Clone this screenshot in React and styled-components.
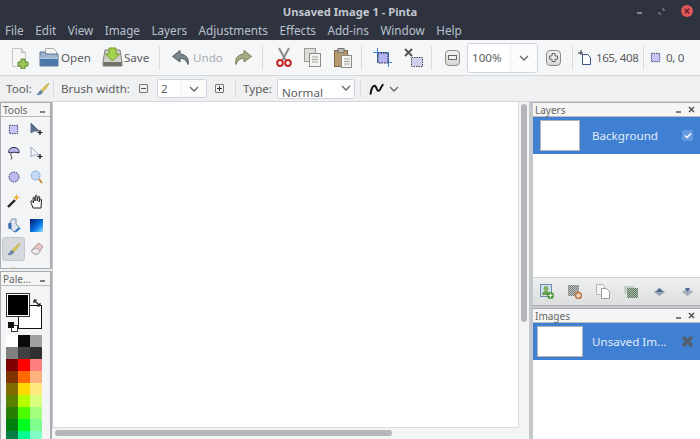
import React from "react";
import styled, { createGlobalStyle } from "styled-components";

const Global = createGlobalStyle`
  html, body { margin: 0; padding: 0; background: #eceded; }
  body { font-family: "Noto Sans", "Open Sans", sans-serif; font-size: 11.6px; overflow: hidden; }
`;

const Window = styled.div`
  width: 700px;
  height: 439px;
  display: flex;
  flex-direction: column;
  overflow: hidden;
  background: #e9eaeb;
  color: #4c4c4c;
`;

const TitleBar = styled.div`
  height: 22px;
  flex: none;
  background: #2f333f;
  display: grid;
  grid-template-columns: 1fr auto 1fr;
  align-items: center;
`;

const Title = styled.div`
  grid-column: 2;
  color: #c3c7cf;
  font-size: 11.2px;
  font-weight: 700;
`;

const WindowButtons = styled.div`
  justify-self: end;
  display: flex;
  align-items: center;
  gap: 16px;
  padding-right: 7px;
`;

const CloseDot = styled.div`
  width: 12px;
  height: 12px;
  border-radius: 50%;
  background: #e0565b;
  display: flex;
  align-items: center;
  justify-content: center;
`;

const MenuBar = styled.div`
  height: 18px;
  flex: none;
  background: #2f333f;
  display: flex;
  align-items: flex-start;
  padding: 1px 0 0 5px;
  box-sizing: border-box;
  gap: 11.5px;
  color: #b9c1cf;
  font-size: 11.7px;
  line-height: 15px;
`;

const ToolRow = styled.div`
  flex: none;
  height: ${(p) => p.$h}px;
  display: flex;
  align-items: center;
  background: ${(p) => p.$bg};
  border-bottom: 1px solid #d5d7d9;
  box-sizing: border-box;
`;

const Item = styled.div`
  flex: none;
  display: flex;
  align-items: center;
  justify-content: center;
  margin-left: ${(p) => p.$ml || 0}px;
`;

const Text = styled.span`
  flex: none;
  width: ${(p) => p.$w}px;
  margin-left: ${(p) => p.$ml || 0}px;
  color: ${(p) => p.$c || "#5c5c5c"};
  font-size: 11.6px;
  letter-spacing: ${(p) => p.$ls || 0}px;
  white-space: nowrap;
`;

const Sep = styled.div`
  flex: none;
  width: 1px;
  height: ${(p) => p.$h || 24}px;
  background: #d9dbdd;
  margin-left: ${(p) => p.$ml || 0}px;
`;

const Combo = styled.div`
  flex: none;
  box-sizing: border-box;
  height: ${(p) => p.$h}px;
  width: ${(p) => p.$w}px;
  margin-left: ${(p) => p.$ml || 0}px;
  display: flex;
  align-items: ${(p) => (p.$clip ? "flex-start" : "center")};
  background: #fff;
  border: 1px solid #cdd3e0;
  border-radius: 3px;
  overflow: hidden;
  color: #5c5c5c;
  font-size: 11.6px;
`;

const ComboText = styled.div`
  flex: 1;
  padding-left: ${(p) => p.$pl || 4}px;
  padding-top: ${(p) => p.$pt || 0}px;
  line-height: 16px;
`;

const ComboArrow = styled.div`
  flex: none;
  width: ${(p) => p.$w}px;
  height: 100%;
  display: flex;
  align-items: ${(p) => (p.$top ? "flex-start" : "center")};
  padding-top: ${(p) => (p.$top ? 3 : 0)}px;
  justify-content: center;
  background: #fbfbfb;
  border-left: ${(p) => (p.$line ? "1px solid #f0f0f0" : "none")};
  box-sizing: border-box;
`;

const ZoomButton = styled.div`
  flex: none;
  width: 15px;
  height: 16px;
  margin-left: ${(p) => p.$ml}px;
  border: 1px solid #8d8d88;
  border-radius: 4px;
  background: linear-gradient(#f2f2f0, #d6d6d2);
  box-sizing: border-box;
  display: flex;
  align-items: center;
  justify-content: center;
`;

const SmallSquare = styled.div`
  flex: none;
  width: 9px;
  height: 9px;
  margin-left: ${(p) => p.$ml}px;
  border: 1px solid #777;
  border-radius: 1px;
  background: #efefef;
  box-sizing: border-box;
  display: flex;
  align-items: center;
  justify-content: center;
`;

const Main = styled.div`
  flex: 1;
  min-height: 0;
  display: flex;
  background: #c9cccf;
`;

const LeftColumn = styled.div`
  flex: none;
  width: 52px;
  display: flex;
  flex-direction: column;
  gap: 2px;
  background: #eceded;
  box-sizing: border-box;
`;

const Dock = styled.div`
  flex: ${(p) => (p.$h ? "none" : 1)};
  height: ${(p) => (p.$h ? p.$h + "px" : "auto")};
  min-height: 0;
  display: flex;
  flex-direction: column;
  overflow: hidden;
  box-sizing: border-box;
  background: ${(p) => p.$bg || "#f3f4f5"};
  border: 1px solid #a9adb1;
  border-left-width: ${(p) => (p.$side ? 4 : 1)}px;
  border-left-color: ${(p) => (p.$side ? "#c5c8cb" : "#a9adb1")};
  border-right-width: ${(p) => (p.$side ? 0 : 2)}px;
  border-bottom-width: ${(p) => (p.$open ? 0 : 1)}px;
`;

const DockHead = styled.div`
  flex: none;
  height: 14px;
  display: flex;
  align-items: center;
  padding: 0 3px 0 2px;
  box-sizing: border-box;
  background: #f4f5f4;
  border-bottom: 1px solid #b9bcbf;
  font-size: 10px;
  color: #666;
`;

const DockTitle = styled.span`
  flex: 1;
`;

const DockControls = styled.div`
  display: flex;
  align-items: center;
  gap: 7px;
  padding-right: 2px;
`;

const ToolGrid = styled.div`
  display: grid;
  grid-template-columns: 23px 23px;
  grid-auto-rows: 24px;
  padding-left: 1px;
`;

const ToolCell = styled.div`
  display: flex;
  align-items: center;
  justify-content: center;
  border-radius: 3px;
  background: ${(p) => (p.$active ? "#d5d8dc" : "transparent")};
  border: 1px solid ${(p) => (p.$active ? "#c3c7cc" : "transparent")};
  box-sizing: border-box;
`;

const ColorStage = styled.div`
  position: relative;
  height: 49px;
  flex: none;
`;

const SwatchPrimary = styled.div`
  position: absolute;
  left: 5px;
  top: 7px;
  width: 24px;
  height: 24px;
  box-sizing: border-box;
  background: #000;
  border: 1px solid #333;
  outline: 1px solid #fff;
  outline-offset: -2px;
  z-index: 1;
`;

const SwatchSecondary = styled.div`
  position: absolute;
  left: 17px;
  top: 19px;
  width: 24px;
  height: 24px;
  box-sizing: border-box;
  background: #fff;
  border: 1px solid #111;
`;

const SwapIcon = styled.div`
  position: absolute;
  left: 32px;
  top: 9px;
`;

const ResetIcon = styled.div`
  position: absolute;
  left: 7px;
  top: 34px;
`;

const PaletteGrid = styled.div`
  display: grid;
  grid-template-columns: repeat(3, 12px);
  grid-auto-rows: 12px;
  padding-left: 5px;
`;

const Chip = styled.div`
  background: ${(p) => p.$c};
`;

const CanvasColumn = styled.div`
  flex: 1;
  min-width: 0;
  display: flex;
  flex-direction: column;
  background: #f3f4f5;
`;

const CanvasRow = styled.div`
  flex: 1;
  min-height: 0;
  display: flex;
`;

const Canvas = styled.div`
  flex: 1;
  background: #fff;
  border-left: 1px solid #c9cccf;
  border-right: 1px solid #d8dadc;
  border-bottom: 1px solid #d8dadc;
`;

const VTrack = styled.div`
  flex: none;
  width: 10px;
  padding: 2px 2px 0 2px;
  box-sizing: border-box;
`;

const VThumb = styled.div`
  width: 6px;
  height: 218px;
  border-radius: 3px;
  background: #b4b6b9;
`;

const HTrack = styled.div`
  flex: none;
  height: 11px;
  padding: 2px 0 0 3px;
  box-sizing: border-box;
`;

const HThumb = styled.div`
  width: 337px;
  height: 6px;
  border-radius: 3px;
  background: #b4b6b9;
`;

const RightColumn = styled.div`
  flex: none;
  width: 171px;
  display: flex;
  flex-direction: column;
  gap: 2px;
  background: #c9cccf;
  box-sizing: border-box;
`;

const RowList = styled.div`
  flex: 1;
  background: #fff;
`;

const SelectedRow = styled.div`
  height: ${(p) => p.$h}px;
  display: flex;
  align-items: center;
  background: #3f80d3;
  color: #e2ecf8;
  font-size: 11.6px;
`;

const Thumb = styled.div`
  flex: none;
  height: ${(p) => p.$h}px;
  width: ${(p) => p.$w}px;
  margin-left: ${(p) => p.$ml}px;
  background: #fff;
  border: 1px solid #b3b3b3;
  box-sizing: border-box;
`;

const RowName = styled.div`
  flex: 1;
  margin-left: ${(p) => p.$ml}px;
  white-space: nowrap;
`;

const CheckBox = styled.div`
  flex: none;
  width: 11px;
  height: 11px;
  margin-right: 7px;
  border-radius: 2px;
  background: #6399de;
  display: flex;
  align-items: center;
  justify-content: center;
`;

const CloseImage = styled.div`
  flex: none;
  display: flex;
  margin-right: 6px;
`;

const LayerToolbar = styled.div`
  flex: none;
  height: 28px;
  display: grid;
  grid-template-columns: repeat(6, 28px);
  align-items: center;
  justify-items: center;
  background: linear-gradient(#eff0f0, #dcdedf);
  border-top: 1px solid #ccced0;
  box-sizing: border-box;
`;

const Selection = ({ size = 12, round }) => (
  <svg width={size} height={size} viewBox="0 0 12 12">
    {round ? (
      <circle cx="6" cy="6" r="5" fill="#bcbcf2" stroke="#33335c" strokeDasharray="1.5 1" />
    ) : (
      <rect x="1.5" y="1.5" width="9" height="9" fill="#c4c4f6" stroke="#33335c" strokeDasharray="1.5 1" />
    )}
  </svg>
);

const NewIcon = () => (
  <svg width="18" height="22" viewBox="0 0 18 22">
    <path d="M1.5 1.5h9l4 4v14h-13z" fill="#f6f6f4" stroke="#c4c4c0" />
    <path d="M10.5 1.5v4h4" fill="#e4e4e0" stroke="#bbb" />
    <path d="M10 12h4v3h3v4h-3v3h-4v-3H7v-4h3z" fill="#9cc45c" stroke="#5d8a2e" />
  </svg>
);

const OpenIcon = () => (
  <svg width="21" height="21" viewBox="0 0 21 21">
    <path d="M6.5 1.5h8l3 3v6h-11z" fill="#f4f4f2" stroke="#aaa" />
    <path d="M1 5h5l1 2h12v12H1z" fill="#9db3cb" stroke="#5a7696" />
    <path d="M1 11h18v8H1z" fill="#4d78a8" />
    <path d="M1 10h18v2H1z" fill="#a9c0d8" />
  </svg>
);

const SaveIcon = () => (
  <svg width="21" height="21" viewBox="0 0 21 21">
    <path d="M3 3h15l2 12v4H1v-4z" fill="#cfd0c9" stroke="#7c7d76" />
    <path d="M1.5 15h18v4h-18z" fill="#70716b" />
    <path d="M7 1h7v6h3.500l-7 7-7-7H7z" fill="#a6d34f" stroke="#6f9a28" />
  </svg>
);

const UndoIcon = ({ flip, fill = "#77848c", stroke = "#4f5a60" }) => (
  <svg width="20" height="17" viewBox="0 0 20 17" style={{ transform: flip ? "scaleX(-1)" : "none" }}>
    <path d="M9 1.500L1.500 7.500 9 13V9.500c3.500 0 6 1 8 6 1.500-6-2-10-8-10.500z" fill={fill} stroke={stroke} />
  </svg>
);

const CutIcon = () => (
  <svg width="16" height="21" viewBox="0 0 16 21">
    <path d="M3 1l6.500 12M13 1L6.500 13" stroke="#8a8a8a" strokeWidth="2" fill="none" />
    <ellipse cx="4" cy="16" rx="2.800" ry="3" fill="none" stroke="#c92626" strokeWidth="2" />
    <ellipse cx="12" cy="16" rx="2.800" ry="3" fill="none" stroke="#c92626" strokeWidth="2" />
  </svg>
);

const CopyIcon = ({ w = 17, h = 19 }) => (
  <svg width={w} height={h} viewBox="0 0 17 19">
    <rect x="0.500" y="0.500" width="11" height="13" fill="#dcdcd8" stroke="#9a9a96" />
    <rect x="5.500" y="5.500" width="11" height="13" fill="#f5f5f3" stroke="#8c8c88" />
    <path d="M8 9h6M8 11.500h6M8 14h6" stroke="#a0a09c" />
  </svg>
);

const PasteIcon = () => (
  <svg width="18" height="20" viewBox="0 0 18 20">
    <rect x="0.500" y="2.500" width="13" height="16" fill="#b69a6e" stroke="#7f6a48" />
    <rect x="4" y="0.500" width="6" height="4" fill="#b9b9b5" stroke="#777" />
    <rect x="7.500" y="7.500" width="10" height="12" fill="#f5f5f3" stroke="#8c8c88" />
    <path d="M10 11h6M10 13.500h6M10 16h6" stroke="#a0a09c" />
  </svg>
);

const CropIcon = () => (
  <svg width="19" height="19" viewBox="0 0 19 19">
    <path d="M0 4.500h15.500V19M4.500 0v14.500H19" stroke="#3f7fd6" fill="none" />
    <rect x="5" y="5" width="10" height="10" fill="#b4b4f4" stroke="#222" strokeDasharray="1.500 1" />
  </svg>
);

const DeselectIcon = () => (
  <svg width="20" height="20" viewBox="0 0 20 20">
    <rect x="7.500" y="9.500" width="11" height="9" fill="#d0d0ee" stroke="#444" strokeDasharray="1.500 1" />
    <path d="M1 1l7 7M8 1L1 8" stroke="#555" strokeWidth="2" />
  </svg>
);

const Chevron = ({ size = 9, color = "#666" }) => (
  <svg width={size} height={size} viewBox="0 0 10 10">
    <path d="M1 3l4 4 4-4" fill="none" stroke={color} strokeWidth="1.300" />
  </svg>
);

const CursorIcon = () => (
  <svg width="13" height="15" viewBox="0 0 13 15">
    <path d="M3 0v5M0 3h5" stroke="#333" />
    <path d="M4.500 4.500h5l3 3v7h-8z" fill="#fff" stroke="#335a87" />
  </svg>
);

const BrushIcon = () => (
  <svg width="14" height="14" viewBox="0 0 14 14">
    <path d="M13 1C10 3 7 6 5 8.500l1.500 1.500C9 8 12 4 13 1z" fill="#e2c55a" stroke="#b39a36" strokeWidth="0.600" />
    <path d="M5 8.500C3 9 3 11 1 12.500c2.500.5 5-.3 5.500-2.500z" fill="#6d8fb5" stroke="#44648a" strokeWidth="0.600" />
  </svg>
);

const CurveIcon = () => (
  <svg width="16" height="14" viewBox="0 0 16 14">
    <path d="M1.500 12.500C2 7 4 3 6 4s1.500 5 3.500 5S12 3 14.500 2.500" fill="none" stroke="#111" strokeWidth="2" />
  </svg>
);

const ArrowSelect = ({ outline }) => (
  <svg width="13" height="14" viewBox="0 0 13 14">
    <path d="M1 1v10l3-2h5z" fill={outline ? "#f4f6fb" : "#5c6f8f"} stroke={outline ? "#9aa8c8" : "#5c6f8f"} />
    <path d="M10 8v5M7.500 10.500h5" stroke="#111" strokeWidth="1.200" />
  </svg>
);

const LassoIcon = () => (
  <svg width="12" height="13" viewBox="0 0 12 13">
    <path d="M1 6C0 2 3 .5 6 .5s5.500 1.500 5 5.500C9 5 3 5 1 6z" fill="#b8b8ee" stroke="#27274a" />
    <path d="M3.500 6.500C2 8 3 9 3.500 9.500S4 12 3 12.500" fill="none" stroke="#333" />
  </svg>
);

const MagnifierIcon = () => (
  <svg width="13" height="14" viewBox="0 0 13 14">
    <circle cx="5.500" cy="5.500" r="4.500" fill="#c3dcf4" stroke="#8fb3d6" />
    <path d="M9 9l3 4" stroke="#c48a3a" strokeWidth="2" />
  </svg>
);

const WandIcon = () => (
  <svg width="13" height="14" viewBox="0 0 13 14">
    <path d="M1 13l7-7" stroke="#222" strokeWidth="2.400" />
    <path d="M9.500 0l1 2.500 2.500 1-2.500 1-1 2.500-1-2.500-2.500-1 2.500-1z" fill="#f0b030" />
  </svg>
);

const HandIcon = () => (
  <svg width="14" height="15" viewBox="0 0 14 15">
    <path d="M3 14C2 11 .5 8 1 7s2 .5 2.500 2L3 4c0-1 1.500-1 1.500 0l.5 3 .5-5c0-1 1.500-1 1.500 0l.2 5 1-4c.3-1 1.600-.7 1.500.3l-.7 4.700 1.200-2.500c.5-.8 1.600-.3 1.300.5L11 14z" fill="#fff" stroke="#222" />
  </svg>
);

const BucketIcon = () => (
  <svg width="15" height="15" viewBox="0 0 15 15">
    <path d="M6 1h4v5l3 3-5 5-6-6z" fill="#dfe6ee" stroke="#7d8fa5" />
    <path d="M4 5v6" stroke="#3a6fb5" strokeWidth="3" />
    <path d="M9 14l5-4" stroke="#3a7fd0" strokeWidth="2" />
  </svg>
);

const EraserIcon = () => (
  <svg width="14" height="14" viewBox="0 0 14 14">
    <path d="M8.500 1L13 4.500 8 12H4L1 9z" fill="#ecc3c3" stroke="#a99" />
    <path d="M1 9l3.500 3H8l2-3-4-3z" fill="#eee" stroke="#aaa" />
  </svg>
);

const PencilTip = () => (
  <svg width="10" height="14" viewBox="0 0 10 14">
    <path d="M1 3c1-2 6-2 7 0v11H1z" fill="#e3a445" />
  </svg>
);

const GradientIcon = () => (
  <svg width="13" height="13" viewBox="0 0 13 13">
    <defs>
      <linearGradient id="grad" x1="0" y1="0" x2="1" y2="1">
        <stop offset="0" stopColor="#001a6e" />
        <stop offset="0.600" stopColor="#0a78e8" />
        <stop offset="1" stopColor="#8fe4ff" />
      </linearGradient>
    </defs>
    <rect width="13" height="13" fill="url(#grad)" />
  </svg>
);

const Checker = ({ id, c1, c2 }) => (
  <pattern id={id} width="2" height="2" patternUnits="userSpaceOnUse">
    <rect width="2" height="2" fill={c1} />
    <rect width="1" height="1" fill={c2} />
    <rect x="1" y="1" width="1" height="1" fill={c2} />
  </pattern>
);

const AddLayerIcon = () => (
  <svg width="14" height="15" viewBox="0 0 14 15">
    <rect x="0.500" y="0.500" width="11" height="12" fill="#cfe0ef" stroke="#6c8db0" />
    <path d="M2 11c0-3 2-4 4-4s4 1 4 4z" fill="#6da04c" />
    <circle cx="6" cy="4.500" r="2.500" fill="#7fb05a" />
    <circle cx="10.500" cy="11.500" r="3.500" fill="#4f9a3a" />
    <path d="M8.500 11.500h4M10.500 9.500v4" stroke="#fff" />
  </svg>
);

const DeleteLayerIcon = () => (
  <svg width="14" height="14" viewBox="0 0 14 14">
    <defs><Checker id="grayCheck" c1="#7a807a" c2="#bcc0bc" /></defs>
    <rect width="11" height="11" fill="url(#grayCheck)" />
    <circle cx="10.500" cy="10.500" r="3" fill="#e6d2c2" stroke="#bd6f3c" strokeWidth="1.400" />
  </svg>
);

const PagesIcon = () => (
  <svg width="14" height="15" viewBox="0 0 14 15">
    <path d="M.5.5h6l2 2v8h-8z" fill="#f3f3f3" stroke="#b5b5b5" />
    <path d="M5.500 4.500h5l3 3v7h-8z" fill="#fff" stroke="#9c9c9c" />
  </svg>
);

const StackIcon = () => (
  <svg width="14" height="12" viewBox="0 0 14 12">
    <defs><Checker id="greenCheck" c1="#5f7a62" c2="#a9bdaa" /></defs>
    <rect x="0" y="0" width="10" height="8" fill="#c4d0c5" />
    <rect x="3" y="2" width="11" height="10" fill="url(#greenCheck)" />
  </svg>
);

const Diamond = ({ down }) => (
  <svg width="11" height="8" viewBox="0 0 11 8">
    <path d="M5.500 0L11 4 5.500 8 0 4z" fill={down ? "#a7aebd" : "#9aa3b6"} />
    <path d={down ? "M3 0h5l-2.500 4z" : "M5.500 0L9 4H2z"} fill="#4f6690" />
  </svg>
);

const CloseX = ({ size = 7, color = "#555" }) => (
  <svg width={size} height={size} viewBox="0 0 7 7">
    <path d="M1 1l5 5M6 1L1 6" stroke={color} strokeWidth="1.600" />
  </svg>
);

const Minimize = ({ color = "#555" }) => (
  <svg width="5" height="6" viewBox="0 0 5 6">
    <path d="M0 5h5" stroke={color} strokeWidth="1.500" />
  </svg>
);

const menus = ["File", "Edit", "View", "Image", "Layers", "Adjustments", "Effects", "Add-ins", "Window", "Help"];

const tools = [
  <Selection key="rect" size={11} />,
  <ArrowSelect key="move" />,
  <LassoIcon key="lasso" />,
  <ArrowSelect key="moveOutline" outline />,
  <Selection key="ellipse" round />,
  <MagnifierIcon key="zoom" />,
  <WandIcon key="wand" />,
  <HandIcon key="hand" />,
  <BucketIcon key="bucket" />,
  <GradientIcon key="gradient" />,
  <BrushIcon key="brush" />,
  <EraserIcon key="eraser" />,
  <PencilTip key="pencil" />,
];

const palette = [
  "#ffffff", "#0a0a0a", "#a0a0a0",
  "#808080", "#404040", "#303030",
  "#7f0000", "#ff0000", "#ff7f7f",
  "#7f3300", "#ff6a00", "#ffb27f",
  "#7f6a00", "#ffd800", "#ffe97f",
  "#5b7f00", "#b6ff00", "#daff7f",
  "#267f00", "#4cff00", "#a5ff7f",
  "#007f0e", "#00ff21", "#7fff8e",
  "#007f46", "#00ff90", "#7fffc5",
];

export default function App() {
  return (
    <Window>
      <Global />
      <TitleBar>
        <Title>Unsaved Image 1 - Pinta</Title>
        <WindowButtons>
          <Minimize color="#a5a8ae" />
          <svg width="7" height="7" viewBox="0 0 7 7">
            <path d="M4 1h2v2M3 6H1V4" stroke="#8e9198" fill="none" />
          </svg>
          <CloseDot>
            <CloseX size={6} color="#5b2226" />
          </CloseDot>
        </WindowButtons>
      </TitleBar>
      <MenuBar>
        {menus.map((m) => (
          <span key={m}>{m}</span>
        ))}
      </MenuBar>

      <ToolRow $h={36} $bg="#f5f6f7">
        <Item $ml={11}><NewIcon /></Item>
        <Item $ml={10}><OpenIcon /></Item>
        <Text $ml={1} $w={30}>Open</Text>
        <Item $ml={11}><SaveIcon /></Item>
        <Text $ml={1} $w={26}>Save</Text>
        <Sep $ml={9} />
        <Item $ml={11}><UndoIcon /></Item>
        <Text $ml={2} $w={29} $c="#a9adb0">Undo</Text>
        <Item $ml={11}><UndoIcon flip fill="#a3ab82" stroke="#757c58" /></Item>
        <Sep $ml={9} />
        <Item $ml={13}><CutIcon /></Item>
        <Item $ml={12}><CopyIcon /></Item>
        <Item $ml={13}><PasteIcon /></Item>
        <Sep $ml={9} />
        <Item $ml={11}><CropIcon /></Item>
        <Item $ml={12}><DeselectIcon /></Item>
        <Sep $ml={7} />
        <ZoomButton $ml={13}>
          <svg width="9" height="6" viewBox="0 0 9 6"><rect x="0.500" y="0.500" width="8" height="4" fill="#eee" stroke="#666" /></svg>
        </ZoomButton>
        <Combo $w={71} $h={30} $ml={7}>
          <ComboText $pl={4}>100%</ComboText>
          <ComboArrow $w={27} $line><Chevron size={10} /></ComboArrow>
        </Combo>
        <ZoomButton $ml={8}>
          <svg width="9" height="9" viewBox="0 0 9 9"><path d="M3 .5h3v2.500h2.500v3H6v2.500H3V6H.5V3H3z" fill="#eee" stroke="#666" /></svg>
        </ZoomButton>
        <Sep $ml={11} />
        <Item $ml={5}><CursorIcon /></Item>
        <Text $ml={5} $w={43} $ls={-0.45}>165, 408</Text>
        <Sep $ml={4} />
        <Item $ml={6}><Selection size={11} /></Item>
        <Text $ml={5} $w={18} $ls={-0.3}>0, 0</Text>
      </ToolRow>

      <ToolRow $h={26} $bg="#eff0f1">
        <Text $ml={6} $w={25}>Tool:</Text>
        <Item $ml={5}><BrushIcon /></Item>
        <Sep $ml={3} $h={17} />
        <Text $ml={7} $w={69}>Brush width:</Text>
        <SmallSquare $ml={9}><svg width="5" height="1"><rect width="5" height="1" fill="#555" /></svg></SmallSquare>
        <Combo $w={50} $h={19} $ml={9}>
          <ComboText $pl={3}>2</ComboText>
          <ComboArrow $w={26} $line><Chevron size={10} /></ComboArrow>
        </Combo>
        <SmallSquare $ml={8}><svg width="5" height="5"><path d="M2 0h1v2h2v1H3v2H2V3H0V2h2z" fill="#333" /></svg></SmallSquare>
        <Sep $ml={11} $h={17} />
        <Text $ml={7} $w={28}>Type:</Text>
        <Combo $w={78} $h={20} $ml={6} $clip>
          <ComboText $pl={4} $pt={5}>Normal</ComboText>
          <ComboArrow $w={17} $top><Chevron size={10} /></ComboArrow>
        </Combo>
        <Sep $ml={5} $h={17} />
        <Item $ml={8}><CurveIcon /></Item>
        <Item $ml={4}><Chevron size={10} /></Item>
      </ToolRow>

      <Main>
        <LeftColumn>
          <Dock $h={167}>
            <DockHead>
              <DockTitle>Tools</DockTitle>
              <DockControls><Minimize /></DockControls>
            </DockHead>
            <ToolGrid>
              {tools.map((tool, i) => (
                <ToolCell key={i} $active={i === 10}>{tool}</ToolCell>
              ))}
            </ToolGrid>
          </Dock>
          <Dock $open>
            <DockHead>
              <DockTitle>Pale...</DockTitle>
              <DockControls><Minimize /></DockControls>
            </DockHead>
            <ColorStage>
              <SwatchPrimary />
              <SwatchSecondary />
              <SwapIcon>
                <svg width="8" height="8" viewBox="0 0 8 8">
                  <path d="M1 1l6 6M1 1h3M1 1v3M7 7H4M7 7V4" stroke="#222" strokeWidth="1.200" fill="none" />
                </svg>
              </SwapIcon>
              <ResetIcon>
                <svg width="10" height="10" viewBox="0 0 10 10">
                  <rect x="3.500" y="3.500" width="6" height="6" fill="#fff" stroke="#333" />
                  <rect width="6" height="6" fill="#111" />
                </svg>
              </ResetIcon>
            </ColorStage>
            <PaletteGrid>
              {palette.map((c, i) => (
                <Chip key={i} $c={c} />
              ))}
            </PaletteGrid>
          </Dock>
        </LeftColumn>

        <CanvasColumn>
          <CanvasRow>
            <Canvas />
            <VTrack><VThumb /></VTrack>
          </CanvasRow>
          <HTrack><HThumb /></HTrack>
        </CanvasColumn>

        <RightColumn>
          <Dock $h={204} $side $bg="#fff">
            <DockHead>
              <DockTitle>Layers</DockTitle>
              <DockControls><Minimize /><CloseX /></DockControls>
            </DockHead>
            <RowList>
              <SelectedRow $h={37}>
                <Thumb $w={40} $h={31} $ml={7} />
                <RowName $ml={12}>Background</RowName>
                <CheckBox>
                  <svg width="8" height="7" viewBox="0 0 8 7"><path d="M1 3.500l2 2 4-4" stroke="#fff" strokeWidth="1.500" fill="none" /></svg>
                </CheckBox>
              </SelectedRow>
            </RowList>
            <LayerToolbar>
              <AddLayerIcon />
              <DeleteLayerIcon />
              <PagesIcon />
              <StackIcon />
              <Diamond />
              <Diamond down />
            </LayerToolbar>
          </Dock>
          <Dock $side $open $bg="#fff">
            <DockHead>
              <DockTitle>Images</DockTitle>
              <DockControls><Minimize /><CloseX /></DockControls>
            </DockHead>
            <RowList>
              <SelectedRow $h={37}>
                <Thumb $w={46} $h={31} $ml={4} />
                <RowName $ml={9}>Unsaved Im...</RowName>
                <CloseImage>
                  <svg width="13" height="13" viewBox="0 0 13 13">
                    <path d="M2 2l9 9M11 2l-9 9" stroke="#55606e" strokeWidth="3.800" />
                  </svg>
                </CloseImage>
              </SelectedRow>
            </RowList>
          </Dock>
        </RightColumn>
      </Main>
    </Window>
  );
}
